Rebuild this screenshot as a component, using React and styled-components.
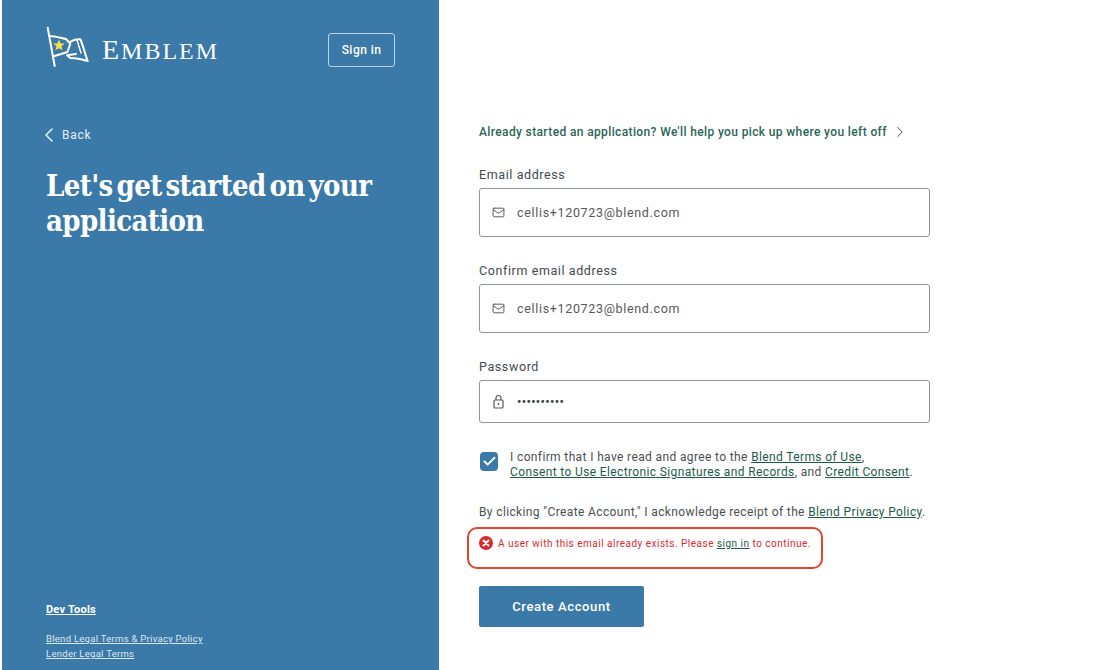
import * as React from 'react'
import styled, { createGlobalStyle } from 'styled-components'
import { ChevronLeft, ChevronRight, Mail, Check } from 'lucide-react'

const Global = createGlobalStyle`
  html, body { margin: 0; padding: 0; background: #fff; }
  body { font-family: Roboto, "Liberation Sans", sans-serif; }
  * { box-sizing: border-box; }
`

const Page = styled.div`
  width: 1098px;
  height: 670px;
  display: flex;
  padding-left: 2px;
  overflow: hidden;
`

const Sidebar = styled.aside`
  width: 437px;
  height: 670px;
  flex: none;
  background: #3b7aa8;
  color: #fff;
  display: flex;
  flex-direction: column;
  padding: 26px 44px 9px 44px;
`

const TopBar = styled.div`
  display: flex;
  align-items: center;
  justify-content: space-between;
  height: 42px;
`

const Logo = styled.div`
  display: flex;
  align-items: center;
  gap: 12px;
`

const LogoText = styled.span`
  display: inline-block;
  font-family: "Liberation Serif", serif;
  font-size: 24px;
  line-height: 30px;
  letter-spacing: 2px;
  margin-top: 6px;
  &::first-letter { font-size: 28px; }
`

const SignIn = styled.button`
  width: 67px;
  height: 34px;
  margin-top: 5px;
  background: transparent;
  color: #fff;
  border: 1px solid #b9d2e4;
  border-radius: 3px;
  font: 500 12px Roboto, sans-serif;
  letter-spacing: 0.45px;
`

const Back = styled.div`
  display: flex;
  align-items: center;
  gap: 1px;
  margin-top: 57px;
  height: 20px;
  font-size: 12px;
  letter-spacing: 0.7px;
  color: #e4eef5;
`

const Heading = styled.h1`
  margin: 24px 0 0;
  font-family: "DejaVu Serif", serif;
  font-stretch: condensed;
  font-size: 29px;
  line-height: 35px;
  font-weight: 700;
  letter-spacing: -0.6px;
  word-spacing: -4.6px;
`

const Footer = styled.div`
  margin-top: auto;
  display: flex;
  flex-direction: column;
`

const DevLink = styled.a`
  font-size: 11px;
  line-height: 14px;
  font-weight: 700;
  letter-spacing: 0.22px;
  text-decoration: underline;
  margin-bottom: 14px;
`

const LegalLink = styled.a`
  font-size: 9.5px;
  line-height: 15px;
  letter-spacing: 0.28px;
  text-decoration: underline;
  color: #dbe8f2;
`

const Main = styled.main`
  flex: 1;
  padding: 124px 0 0 40px;
  color: #3f4548;
`

const TopLink = styled.div`
  display: flex;
  align-items: center;
  gap: 4px;
  height: 16px;
  font-size: 12px;
  font-weight: 500;
  letter-spacing: 0.37px;
  color: #2a6656;
`

const Form = styled.div`
  width: 451px;
  margin-top: 27px;
  display: flex;
  flex-direction: column;
`

const Field = styled.div`
  margin-bottom: 26px;
`

const Label = styled.label`
  display: block;
  font-size: 12.5px;
  line-height: 16px;
  letter-spacing: 0.6px;
  margin-bottom: 5px;
  color: #43494c;
`

const InputBox = styled.div`
  height: ${p => p.$h}px;
  border: 1px solid #8f9496;
  border-radius: 3px;
  display: flex;
  align-items: center;
  padding-left: 12px;
  gap: 12px;
  font-size: 12.5px;
  letter-spacing: 0.67px;
  color: #55595c;
`

const Dots = styled.span`
  font-size: 12px;
  font-weight: 700;
  letter-spacing: 0.4px;
  color: #3f4548;
`

const ConsentRow = styled.div`
  display: flex;
  gap: 12px;
  margin-top: 1px;
  padding-left: 1px;
`

const CheckBox = styled.div`
  width: 18px;
  height: 19px;
  margin-top: 2px;
  flex: none;
  border-radius: 4px;
  background: #3b7aa8;
  color: #fff;
  display: flex;
  align-items: center;
  justify-content: center;
`

const Small = styled.p`
  margin: 0;
  font-size: 12px;
  line-height: 15px;
  letter-spacing: 0.37px;
  color: #4a4f52;
`

const Link = styled.a`
  color: #1e5a4a;
  text-decoration: underline;
`

const Notice = styled(Small)`
  margin-top: 25px;
  white-space: nowrap;
`

const ErrorRow = styled.div`
  position: relative;
  display: flex;
  align-items: center;
  gap: 5px;
  height: 16px;
  margin-top: 15px;
  font-size: 10px;
  letter-spacing: 0.49px;
  color: #d8282f;
`

/* red annotation drawn over the page */
const ErrorOutline = styled.div`
  position: absolute;
  left: -12px;
  top: -8px;
  width: 356px;
  height: 42px;
  border: 2px solid #e8432a;
  border-radius: 10px;
`

const Submit = styled.button`
  width: 165px;
  height: 41px;
  margin-top: 35px;
  border: none;
  border-radius: 2px;
  background: #3b7aa8;
  color: #fff;
  font: 500 13px Roboto, sans-serif;
  letter-spacing: 0.62px;
`

const FlagLogo = () => (
  <svg width="44" height="42" viewBox="0 0 44 42" fill="none" stroke="#fff" strokeWidth="2" strokeLinejoin="round" strokeLinecap="round">
    <path d="M1.7 1.7 L8.7 40" />
    <path d="M3.3 10 C9 10 15 12 20 13 L24.3 17.7 L21.5 26 L7.7 30.3" />
    <path d="M24 16 C28 13 31 13 34.3 13.3 C37 19 39 28 41.7 35 C35 33 29 32 24.3 32 L21 29.3 L30 28" />
    <path d="M31 14 L35 27" strokeWidth="1.4" />
    <path d="M13 13.5 L14.6 17.3 L18.6 17.6 L15.6 20.3 L16.5 24.3 L13 22.2 L9.5 24.3 L10.4 20.3 L7.4 17.6 L11.4 17.3 Z" fill="#f1e04a" stroke="none" />
  </svg>
)

const LockIcon = () => (
  <svg width="13" height="15" viewBox="0 0 13 15" fill="none" stroke="currentColor" strokeWidth="1.2">
    <rect x="2" y="6" width="9" height="8" rx="1" />
    <path d="M4 6 V4 a2.5 2.5 0 0 1 5 0 V6" />
    <circle cx="6.5" cy="10" r="0.9" fill="currentColor" stroke="none" />
  </svg>
)

const ErrorIcon = () => (
  <svg width="14" height="14" viewBox="0 0 14 14">
    <circle cx="7" cy="7" r="7" fill="#d8282f" />
    <path d="M4.5 4.5 L9.5 9.5 M9.5 4.5 L4.5 9.5" stroke="#fff" strokeWidth="2" strokeLinecap="round" />
  </svg>
)

export default function App() {
  return (
    <Page>
      <Global />
      <Sidebar>
        <TopBar>
          <Logo>
            <FlagLogo />
            <LogoText>EMBLEM</LogoText>
          </Logo>
          <SignIn>Sign in</SignIn>
        </TopBar>
        <Back>
          <ChevronLeft size={24} strokeWidth={1.6} style={{ marginLeft: -9 }} />
          Back
        </Back>
        <Heading>Let's get started on your application</Heading>
        <Footer>
          <DevLink>Dev Tools</DevLink>
          <LegalLink>Blend Legal Terms &amp; Privacy Policy</LegalLink>
          <LegalLink>Lender Legal Terms</LegalLink>
        </Footer>
      </Sidebar>
      <Main>
        <TopLink>
          Already started an application? We'll help you pick up where you left off
          <ChevronRight size={18} strokeWidth={1.3} color="#3f4548" />
        </TopLink>
        <Form>
          <Field>
            <Label>Email address</Label>
            <InputBox $h={49}>
              <Mail size={13} strokeWidth={1.8} />
              cellis+120723@blend.com
            </InputBox>
          </Field>
          <Field>
            <Label>Confirm email address</Label>
            <InputBox $h={49}>
              <Mail size={13} strokeWidth={1.8} />
              cellis+120723@blend.com
            </InputBox>
          </Field>
          <Field>
            <Label>Password</Label>
            <InputBox $h={43}>
              <LockIcon />
              <Dots>••••••••••</Dots>
            </InputBox>
          </Field>
          <ConsentRow>
            <CheckBox><Check size={15} strokeWidth={3} /></CheckBox>
            <Small>
              I confirm that I have read and agree to the <Link>Blend Terms of Use</Link>,<br />
              <Link>Consent to Use Electronic Signatures and Records</Link>, and <Link>Credit Consent</Link>.
            </Small>
          </ConsentRow>
          <Notice>
            By clicking "Create Account," I acknowledge receipt of the <Link>Blend Privacy Policy</Link>.
          </Notice>
          <ErrorRow>
            <ErrorIcon />
            <span>A user with this email already exists. Please <Link>sign in</Link> to continue.</span>
            <ErrorOutline />
          </ErrorRow>
          <Submit>Create Account</Submit>
        </Form>
      </Main>
    </Page>
  )
}
